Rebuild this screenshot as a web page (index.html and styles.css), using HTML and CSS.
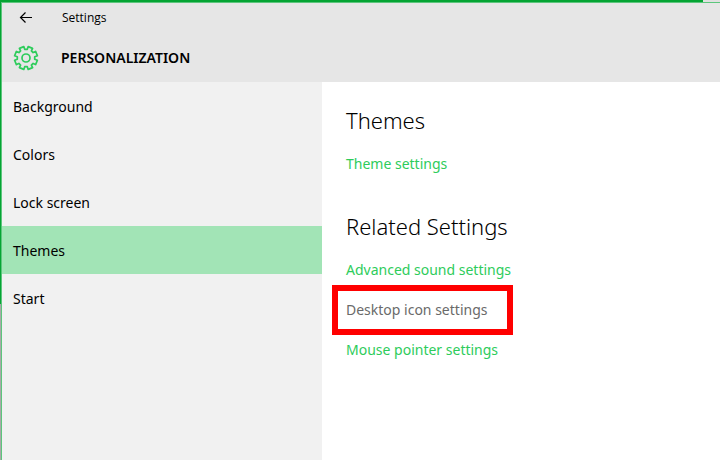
FILE: index.html
```html
<!DOCTYPE html>
<html lang="en">
<head>
<meta charset="utf-8">
<meta name="viewport" content="width=device-width, initial-scale=1">
<title>Settings</title>
<link rel="stylesheet" href="styles.css">
</head>
<body>
<div class="desktop">
  <div class="window">
    <header class="header">
      <div class="titlebar">
        <button class="back" type="button" aria-label="Back">
          <svg width="14" height="12" viewBox="0 0 14 12" fill="none" stroke="#000" stroke-width="1.2"><path d="M13 5.5H1.5M6.5 .5l-5 5 5 5"/></svg>
        </button>
        <span class="app-name">Settings</span>
      </div>
      <div class="heading">
        <svg class="gear" width="26" height="26" viewBox="0 0 26 26" fill="none" stroke="#2ecc5b" stroke-width="1.7" stroke-linejoin="round">
          <path d="M11.7 4.3 10.8 1.6 6.4 3.4 7.6 5.9 5.9 7.6 3.4 6.4 1.6 10.8 4.3 11.7V14.3L1.6 15.2 3.4 19.6 5.9 18.4 7.6 20.1 6.4 22.6 10.8 24.4 11.7 21.7H14.3L15.2 24.4 19.6 22.6 18.4 20.1 20.1 18.4 22.6 19.6 24.4 15.2 21.7 14.3V11.7L24.4 10.8 22.6 6.4 20.1 7.6 18.4 5.9 19.6 3.4 15.2 1.6 14.3 4.3Z"/>
          <circle cx="13" cy="13" r="4"/>
        </svg>
        <h1>PERSONALIZATION</h1>
      </div>
    </header>
    <div class="body">
      <nav class="sidebar">
        <a href="#background">Background</a>
        <a href="#colors">Colors</a>
        <a href="#lock">Lock screen</a>
        <a href="#themes" class="active" aria-current="page">Themes</a>
        <a href="#start">Start</a>
      </nav>
      <main class="content">
        <section>
          <h2>Themes</h2>
          <ul class="links">
            <li><a href="#theme-settings">Theme settings</a></li>
          </ul>
        </section>
        <section>
          <h2>Related Settings</h2>
          <ul class="links">
            <li><a href="#sound">Advanced sound settings</a></li>
            <li class="marked"><a href="#icons">Desktop icon settings</a></li>
            <li><a href="#pointer">Mouse pointer settings</a></li>
          </ul>
        </section>
      </main>
    </div>
  </div>
</div>
</body>
</html>
```
FILE: styles.css
```css
* {
  box-sizing: border-box;
}

body {
  margin: 0;
  font-family: "Noto Sans", "Open Sans", sans-serif;
  font-size: 14px;
  line-height: 20px;
  color: #000;
}

/* Strip of desktop visible along the top and left window edges */
.desktop {
  display: flex;
  min-height: 100vh;
  padding: 2px 0 0 1px;
  background:
    linear-gradient(#05a433, #05a433) 0 0 / calc(100% - 17px) 2px no-repeat,
    linear-gradient(#05a433, #05a433) 0 0 / 1px 304px no-repeat,
    linear-gradient(#e0e0e0, #e0e0e0) 0 0 / 100% 2px no-repeat,
    #a8a8a8;
}

.window {
  display: flex;
  flex: 1;
  flex-direction: column;
  border-top: 1px solid #5cc67c;
  border-left: 1px solid #5cc67c;
}

.header {
  height: 79px;
  background: #e6e6e6;
}

.titlebar {
  display: flex;
  align-items: center;
  height: 30px;
}

.back {
  display: flex;
  align-items: center;
  justify-content: center;
  width: 48px;
  height: 30px;
  padding: 0;
  border: 0;
  background: none;
}

.app-name {
  padding-left: 12px;
  font-family: "Open Sans", "Noto Sans", sans-serif;
  font-size: 12px;
}

.heading {
  display: flex;
  align-items: center;
  gap: 22px;
  height: 50px;
  padding-left: 11px;
}

h1 {
  margin: 0;
  font-size: 14px;
  font-weight: 600;
}

.body {
  display: flex;
  flex: 1;
}

.sidebar {
  flex: 0 0 320px;
  background: #f1f1f1;
}

.sidebar a {
  display: flex;
  align-items: center;
  height: 48px;
  padding: 2px 0 0 11px;
  color: #000;
  text-decoration: none;
}

.sidebar .active {
  background: #a2e4b6;
}

.content {
  flex: 1;
  padding: 24px;
  background: #fff;
}

section + section {
  margin-top: 38px;
}

h2 {
  margin: 0;
  font-size: 22px;
  font-weight: 300;
  line-height: 28px;
}

.links {
  display: grid;
  gap: 20px;
  margin: 20px 0 0;
  padding: 0;
  list-style: none;
}

.links a {
  color: #2ecc5b;
  text-decoration: none;
}

.marked {
  position: relative;
  justify-self: start;
}

.marked::after {
  content: "";
  position: absolute;
  inset: -15px -26px -15px -14px;
  border: 6px solid #f00;
  pointer-events: none;
}

.links .marked a {
  color: #6a6a6a;
}
```
